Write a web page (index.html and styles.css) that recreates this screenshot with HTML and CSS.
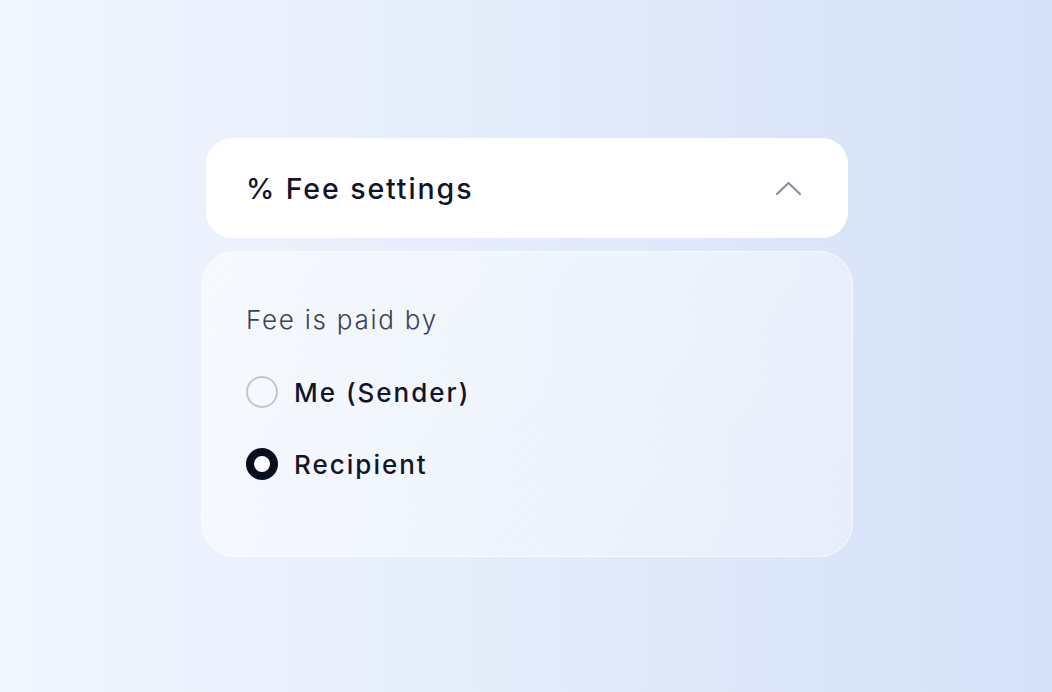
FILE: index.html
```html
<!DOCTYPE html>
<html lang="en">
<head>
<meta charset="utf-8">
<title>Fee settings</title>
<link rel="stylesheet" href="styles.css">
</head>
<body>
<main class="stage">
  <section class="panel">
    <header class="panel-head">
      <h2 class="panel-title">% Fee settings</h2>
      <svg class="chevron" width="27" height="16" viewBox="0 0 27 16" aria-hidden="true">
        <path d="M2 14 L13.5 3 L25 14" fill="none" stroke="#8b91a1" stroke-width="2.2" stroke-linecap="round" stroke-linejoin="round"/>
      </svg>
    </header>
    <div class="panel-body">
      <p class="label">Fee is paid by</p>
      <label class="option">
        <span class="radio"></span>
        <span class="option-text">Me (Sender)</span>
      </label>
      <label class="option">
        <span class="radio radio-on"></span>
        <span class="option-text">Recipient</span>
      </label>
    </div>
  </section>
</main>
</body>
</html>
```
FILE: styles.css
```css
* { box-sizing: border-box; }
html, body {
  margin: 0;
  height: 100%;
}
body {
  font-family: "Inter", "Open Sans", sans-serif;
  background: linear-gradient(90deg, #f1f6ff 0%, #e6eefb 40%, #dce6f9 75%, #d5e1f8 100%);
  color: #0f1222;
}
.stage {
  height: 692px;
  padding: 138px 0 0 2px;
  display: flex;
  justify-content: center;
}
.panel {
  width: 652px;
  display: flex;
  flex-direction: column;
  align-items: center;
  gap: 13px;
}
.panel-head {
  width: 642px;
  height: 100px;
  background: #ffffff;
  border-radius: 26px;
  display: flex;
  align-items: center;
  justify-content: space-between;
  padding: 0 46px 0 40px;
}
.panel-title {
  margin: 0;
  font-size: 28.5px;
  font-weight: 500;
  letter-spacing: 1.9px;
  color: #12152a;
}
.chevron { display: block; }
.panel-body {
  width: 652px;
  height: 306px;
  border-radius: 34px;
  background: linear-gradient(135deg, rgba(255,255,255,0.55), rgba(255,255,255,0.35));
  border: 1.5px solid rgba(255,255,255,0.55);
  padding: 48px 44px 0 44px;
  display: flex;
  flex-direction: column;
  gap: 32px;
}
.label {
  margin: 0;
  height: 40px;
  line-height: 40px;
  font-size: 26px;
  font-weight: 300;
  letter-spacing: 1.75px;
  color: #3b4058;
}
.option {
  height: 40px;
  display: flex;
  align-items: center;
  gap: 16px;
}
.radio {
  width: 32px;
  height: 32px;
  border-radius: 50%;
  border: 2px solid #c2c6d1;
  background: transparent;
  flex: none;
}
.radio-on {
  border: 8px solid #0a0d1e;
  background: #ffffff;
}
.option-text {
  font-size: 26px;
  font-weight: 500;
  letter-spacing: 2px;
  color: #12152a;
}
```
